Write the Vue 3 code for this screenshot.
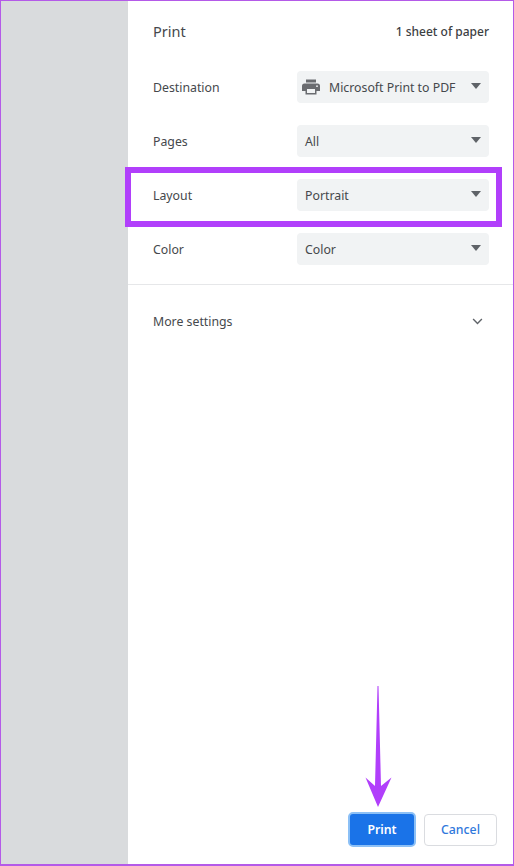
<script setup>
const rows = [
  { label: 'Destination', value: 'Microsoft Print to PDF', printer: true },
  { label: 'Pages', value: 'All' },
  { label: 'Layout', value: 'Portrait' },
  { label: 'Color', value: 'Color' }
]
</script>

<template>
  <div class="frame">
    <aside class="preview"></aside>
    <main class="panel">
      <header class="head">
        <h1 class="title">Print</h1>
        <span class="sheets">1 sheet of paper</span>
      </header>
      <section class="rows">
        <div v-for="row in rows" :key="row.label" class="row">
          <span class="label">{{ row.label }}</span>
          <div class="select" :class="{ 'has-icon': row.printer }">
            <svg v-if="row.printer" class="printer" viewBox="0 0 18 16" width="18" height="16">
              <path fill="#6a6c70" d="M4 0.5h10v3H4zM2.5 4.5h13A2.5 2.5 0 0 1 18 7v5h-3.5v3.5h-11V12H0V7a2.5 2.5 0 0 1 2.5-2.5z" />
              <path fill="#f1f3f4" d="M5 10h8v4H5z" />
              <circle cx="15" cy="7.2" r="0.9" fill="#f1f3f4" />
            </svg>
            <span class="value">{{ row.value }}</span>
            <span class="caret"></span>
          </div>
        </div>
      </section>
      <div class="more">
        <span class="label">More settings</span>
        <svg class="chevron" viewBox="0 0 12 8" width="11" height="7">
          <path d="M1 1.2l5 5 5-5" fill="none" stroke="#5f6368" stroke-width="1.6" />
        </svg>
      </div>
      <footer class="actions">
        <button class="btn primary">Print</button>
        <button class="btn secondary">Cancel</button>
      </footer>
    </main>
    <div class="highlight"></div>
    <svg class="arrow" viewBox="0 0 28 122" width="28" height="122">
      <path fill="#b13ffb" d="M13.5 0h1L17 100l10.5 -8.5L14 121 1.5 91.5 11 100z" />
    </svg>
  </div>
</template>

<style>
html, body { margin: 0; padding: 0; background: #fff; }
</style>

<style scoped>
.frame {
  position: relative;
  box-sizing: border-box;
  width: 514px;
  height: 866px;
  display: flex;
  border: 1px solid #b45ae8;
  border-bottom-width: 2px;
  font-family: "Noto Sans", "Open Sans", sans-serif;
  font-size: 12.3px;
  color: #45484c;
  background: #fff;
}
.preview {
  width: 127px;
  flex: none;
  background: #d9dbdd;
}
.panel {
  flex: 1;
  display: flex;
  flex-direction: column;
  min-width: 0;
}
.head {
  display: flex;
  justify-content: space-between;
  align-items: center;
  height: 20px;
  margin-top: 20px;
  padding: 0 24px 0 25px;
}
.title {
  margin: 0;
  font-size: 14.5px;
  font-weight: 400;
  color: #45484c;
}
.sheets {
  font-size: 12px;
  font-weight: 500;
  color: #3c4043;
}
.rows {
  display: flex;
  flex-direction: column;
  gap: 22px;
  margin-top: 30px;
  padding: 0 24px 19px 25px;
  border-bottom: 1px solid #e6e7e9;
}
.row {
  display: flex;
  justify-content: space-between;
  align-items: center;
  height: 32px;
}
.select {
  position: relative;
  box-sizing: border-box;
  width: 192px;
  height: 32px;
  display: flex;
  align-items: center;
  padding-left: 8px;
  border-radius: 4px;
  background: #f1f3f4;
}
.printer {
  flex: none;
  margin-left: -3px;
  margin-right: 9px;
}
.caret {
  position: absolute;
  right: 8px;
  top: 12px;
  width: 0;
  height: 0;
  border-left: 5px solid transparent;
  border-right: 5px solid transparent;
  border-top: 6px solid #5f6368;
}
.more {
  display: flex;
  justify-content: space-between;
  align-items: center;
  height: 20px;
  margin-top: 26px;
  padding: 0 30px 0 25px;
}
.actions {
  margin-top: auto;
  display: flex;
  justify-content: flex-end;
  align-items: center;
  gap: 8px;
  padding: 0 16px 17px 0;
}
.btn {
  box-sizing: border-box;
  font-family: inherit;
  font-size: 12.3px;
  font-weight: 600;
  border-radius: 4px;
  padding: 0;
}
.primary {
  width: 68px;
  height: 35px;
  margin-left: -1px;
  color: #fff;
  background: #1a73e8;
  border: 2px solid #8cc0f6;
  border-radius: 5px;
}
.secondary {
  width: 73px;
  height: 32px;
  font-weight: 500;
  color: #2f78dc;
  background: #fff;
  border: 1px solid #dadce0;
}
.highlight {
  position: absolute;
  left: 124px;
  top: 166px;
  width: 365px;
  height: 48px;
  border: 6px solid #b13ffb;
}
.arrow {
  position: absolute;
  left: 363px;
  top: 685px;
}
</style>
